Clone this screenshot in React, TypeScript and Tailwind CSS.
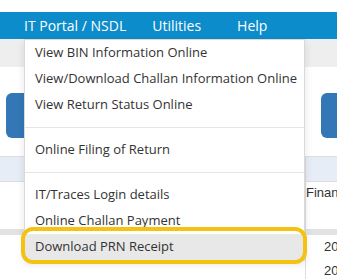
export default function App() {
  const groups = [
    ["View BIN Information Online", "View/Download Challan Information Online", "View Return Status Online"],
    ["Online Filing of Return"],
    ["IT/Traces Login details", "Online Challan Payment", "Download PRN Receipt"],
  ];

  return (
    <div className="relative h-[279px] w-[337px] overflow-hidden bg-white font-['Open_Sans',sans-serif]">
      <div className="h-3" />
      <nav className="flex h-[27px] items-center bg-[#0c8ccb] pl-6 text-[14px] text-white">
        <span>IT Portal / NSDL</span>
        <span className="ml-[26px]">Utilities</span>
        <span className="ml-[36px]">Help</span>
      </nav>
      <div className="h-[28px] bg-[#eeeeee]" />
      <div className="flex h-[89px] items-start justify-between pt-[26px]">
        <div className="ml-[6px] h-[45px] w-[60px] rounded-md bg-[#3377b6]" />
        <div className="-mr-[14px] h-[45px] w-[30px] rounded-md bg-[#3377b6]" />
      </div>

      <div className="grid grid-cols-[305px_1fr] border-t border-[#dddddd] font-['Liberation_Sans',sans-serif] text-[12px] text-[#333]">
        <div className="h-[25px] border-b border-[#dddddd] bg-[#e6edf7]" />
        <div className="h-[25px] border-b border-l border-[#dddddd] bg-[#e6edf7]" />
        <div className="h-[47px]" />
        <div className="h-[47px] overflow-hidden whitespace-nowrap border-l border-[#dddddd] pt-[1px] text-[13px]">Financial Year</div>
        <div className="h-[6px] bg-[#e2e2e2]" />
        <div className="h-[6px] border-l border-[#dddddd] bg-[#e2e2e2]" />
        {["2022-23", "2021-22"].map((fy) => (
          <>
            <div key={fy + "a"} className="h-[24px]" />
            <div key={fy} className="flex h-[24px] items-center overflow-hidden whitespace-nowrap border-l border-[#dddddd] pl-[18px] text-[13px]">
              {fy}
            </div>
          </>
        ))}
      </div>

      <div className="absolute left-[24px] top-[39px] w-[281px] border border-black/15 bg-white shadow-[0_3px_8px_rgba(0,0,0,0.1)]">
        {groups.map((items, gi) => (
          <div key={gi}>
            {gi > 0 && <div className="my-[9px] h-px bg-[#e5e5e5]" />}
            {items.map((label) => (
              <div
                key={label}
                className={`flex h-[26px] items-center whitespace-nowrap px-[10px] text-[13px] text-[#333] ${
                  label === "Download PRN Receipt" ? "bg-[#e8e8e8]" : ""
                }`}
              >
                {label}
              </div>
            ))}
          </div>
        ))}
      </div>

      <div className="absolute left-[21px] top-[227px] h-[37px] w-[286px] rounded-[12px] border-4 border-[#f5c211]" />
    </div>
  );
}
